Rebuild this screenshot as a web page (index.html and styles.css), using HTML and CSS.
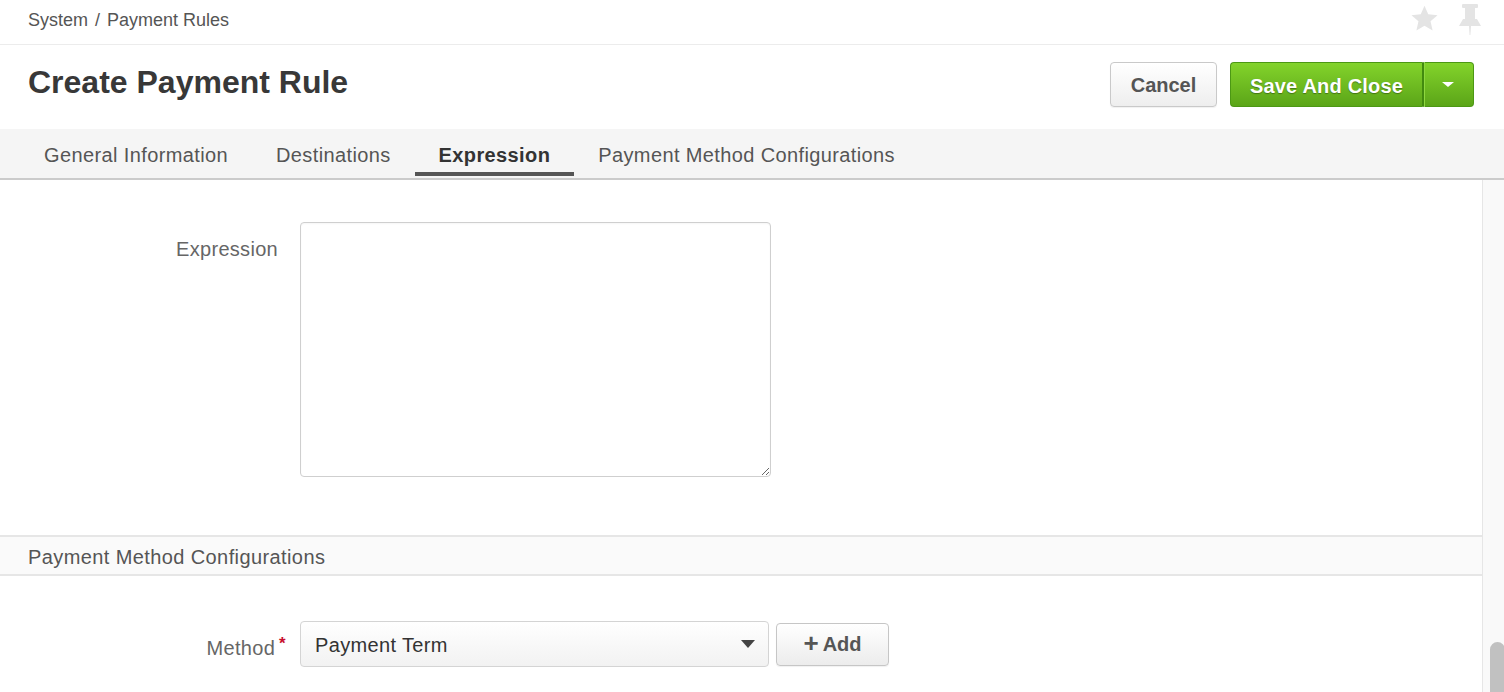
FILE: index.html
```html
<!DOCTYPE html>
<html lang="en">
<head>
<meta charset="utf-8">
<title>Create Payment Rule</title>
<link rel="stylesheet" href="styles.css">
</head>
<body>
<div class="page">
  <div class="topbar">
    <nav class="crumbs"><span>System</span><span class="sep">/</span><span>Payment Rules</span></nav>
    <div class="topicons">
      <svg class="star" width="29" height="28" viewBox="0 0 24 23" aria-hidden="true"><polygon points="12,0.5 15.1,7.6 22.8,8.3 17,13.4 18.7,21 12,17.1 5.3,21 7,13.4 1.2,8.3 8.9,7.6"/></svg>
      <svg class="pin" width="22" height="31" viewBox="0 0 22 31" aria-hidden="true"><rect x="3" y="0" width="16" height="4" rx="1"/><rect x="6" y="4" width="10" height="11"/><polygon points="0,22 4,15 18,15 22,22"/><polygon points="10,22 12,22 11.4,31 10.6,31"/></svg>
    </div>
  </div>

  <header class="pagehead">
    <h1 class="title">Create Payment Rule</h1>
    <div class="actions">
      <button class="btn btn-default" type="button">Cancel</button>
      <div class="btn-group">
        <button class="btn btn-success btn-main" type="button">Save And Close</button>
        <button class="btn btn-success btn-caret" type="button"><span class="caret-w"></span></button>
      </div>
    </div>
  </header>

  <nav class="tabs">
    <a class="tab">General Information</a>
    <a class="tab">Destinations</a>
    <a class="tab active">Expression</a>
    <a class="tab">Payment Method Configurations</a>
  </nav>

  <div class="body">
    <main class="content">
      <div class="form-row first">
        <label class="label label-top">Expression</label>
        <textarea class="textarea"></textarea>
      </div>

      <div class="section-head">Payment Method Configurations</div>

      <div class="form-row method">
        <label class="label label-mid">Method<span class="req">*</span></label>
        <div class="select"><span class="select-text">Payment Term</span><span class="caret-d"></span></div>
        <button class="btn btn-add" type="button"><span class="plus">+</span>Add</button>
      </div>
    </main>
    <div class="scrolltrack"><div class="thumb"></div></div>
  </div>
</div>
</body>
</html>
```

FILE: styles.css
```css
html, body {
  margin: 0;
  padding: 0;
  height: 100%;
  overflow: hidden;
  background: #fff;
}

body {
  font-family: "Liberation Sans", Arial, Helvetica, sans-serif;
  color: #555;
}

.page {
  height: 100vh;
  display: flex;
  flex-direction: column;
}

/* top bar */
.topbar {
  height: 44px;
  border-bottom: 1px solid #ececec;
  display: flex;
  align-items: center;
  justify-content: space-between;
  padding: 0 23px 0 28px;
  flex: none;
}

.crumbs {
  font-size: 18px;
  line-height: 20px;
  color: #555;
  padding-bottom: 4px;
  display: flex;
  gap: 7px;
}

.topicons {
  display: flex;
  align-items: center;
  gap: 20px;
  padding-bottom: 6px;
}

.topicons svg {
  fill: #e4e4e4;
  display: block;
}

/* page header */
.pagehead {
  flex: none;
  display: flex;
  align-items: center;
  justify-content: space-between;
  padding: 17px 30px 22px 28px;
}

.title {
  margin: 0 0 6px;
  font-size: 32px;
  line-height: 36px;
  font-weight: bold;
  color: #383838;
}

.actions {
  display: flex;
  align-items: center;
  gap: 13px;
}

.btn {
  font-family: "Liberation Sans", Arial, Helvetica, sans-serif;
  font-size: 20px;
  font-weight: bold;
  height: 45px;
  border-radius: 4px;
  cursor: pointer;
  margin: 0;
}

.btn-default {
  padding: 2px 19px 0;
  width: 107px;
  color: #555;
  background: linear-gradient(#ffffff, #eeeeee);
  border: 1px solid #c9c9c9;
  box-shadow: 0 1px 1px rgba(0, 0, 0, 0.06);
}

.btn-group {
  display: flex;
}

.btn-success {
  color: #fff;
  background: linear-gradient(#83d32b, #5ba518);
  border: 1px solid #4c9814;
  text-shadow: 0 1px 1px rgba(0, 0, 0, 0.35);
}

.btn-main {
  width: 194px;
  padding: 3px 16px 0;
  letter-spacing: 0.2px;
  border-radius: 4px 0 0 4px;
  border-right: 2px solid #428a0f;
}

.btn-caret {
  width: 50px;
  padding: 0;
  border-radius: 0 4px 4px 0;
  border-left: 1px solid #8ed83f;
  display: flex;
  align-items: center;
  justify-content: center;
}

.caret-w {
  width: 0;
  height: 0;
  border-left: 6px solid transparent;
  border-right: 6px solid transparent;
  border-top: 5px solid #fff;
  margin-left: -2px;
}

/* tabs */
.tabs {
  flex: none;
  display: flex;
  background: #f5f5f5;
  padding: 0 0 2px 20px;
  border-bottom: 2px solid #cbcbcb;
}

.tab {
  padding: 9px 24px 0;
  line-height: 34px;
  font-size: 20px;
  letter-spacing: 0.38px;
  color: #555;
  border-bottom: 4px solid transparent;
  white-space: nowrap;
}

.tab.active {
  color: #333;
  font-weight: bold;
  border-bottom-color: #555;
}

/* body */
.body {
  flex: 1;
  display: flex;
  min-height: 0;
  overflow: hidden;
}

.content {
  flex: 1;
  padding-top: 42px;
}

.scrolltrack {
  flex: none;
  width: 21px;
  background: #f9f9f9;
  border-left: 1px solid #e6e6e6;
  overflow: hidden;
}

.thumb {
  margin: 462px 0 0 7px;
  width: 15px;
  height: 120px;
  border-radius: 8px;
  background: #c1c1c1;
}

.form-row {
  display: flex;
}

.label {
  width: 278px;
  box-sizing: border-box;
  margin-right: 22px;
  text-align: right;
  font-size: 20px;
  letter-spacing: 0.3px;
  color: #666;
  flex: none;
}

.label-top {
  padding-top: 14px;
  line-height: 26px;
}

.label-mid {
  align-self: center;
  line-height: 26px;
  padding-top: 4px;
  padding-right: 4px;
}

.req {
  color: #c8102e;
  font-weight: bold;
  font-size: 17px;
  vertical-align: 6px;
  margin-left: 4px;
  margin-right: -12px;
}

.textarea {
  width: 471px;
  height: 255px;
  box-sizing: border-box;
  border: 1px solid #cfcfcf;
  border-radius: 4px;
  box-shadow: inset 0 1px 2px rgba(0, 0, 0, 0.04);
  margin: 0;
  font-family: inherit;
  font-size: 18px;
  padding: 8px;
}

.section-head {
  margin-top: 58px;
  height: 35px;
  padding-top: 2px;
  line-height: 37px;
  background: #fafafa;
  border-top: 2px solid #e6e6e6;
  border-bottom: 2px solid #e6e6e6;
  padding-left: 28px;
  font-size: 20px;
  letter-spacing: 0.4px;
  color: #555;
}

.method {
  margin-top: 45px;
  align-items: center;
}

.select {
  width: 469px;
  height: 46px;
  box-sizing: border-box;
  border: 1px solid #d4d4d4;
  border-radius: 4px;
  background: linear-gradient(#ffffff, #f2f2f2);
  display: flex;
  align-items: center;
  justify-content: space-between;
  padding: 3px 13px 0 14px;
  flex: none;
}

.select-text {
  font-size: 20px;
  letter-spacing: 0.35px;
  color: #333;
}

.caret-d {
  width: 0;
  height: 0;
  border-left: 7px solid transparent;
  border-right: 7px solid transparent;
  border-top: 8px solid #444;
  margin-top: -3px;
}

.btn-add {
  margin-left: 7px;
  width: 113px;
  height: 43px;
  padding: 0;
  color: #555;
  background: linear-gradient(#ffffff, #ececec);
  border: 1px solid #c6c6c6;
  box-shadow: 0 1px 1px rgba(0, 0, 0, 0.06);
  display: flex;
  align-items: center;
  justify-content: center;
  gap: 4px;
}

.plus {
  font-size: 26px;
  line-height: 20px;
  margin-top: -3px;
}
```
